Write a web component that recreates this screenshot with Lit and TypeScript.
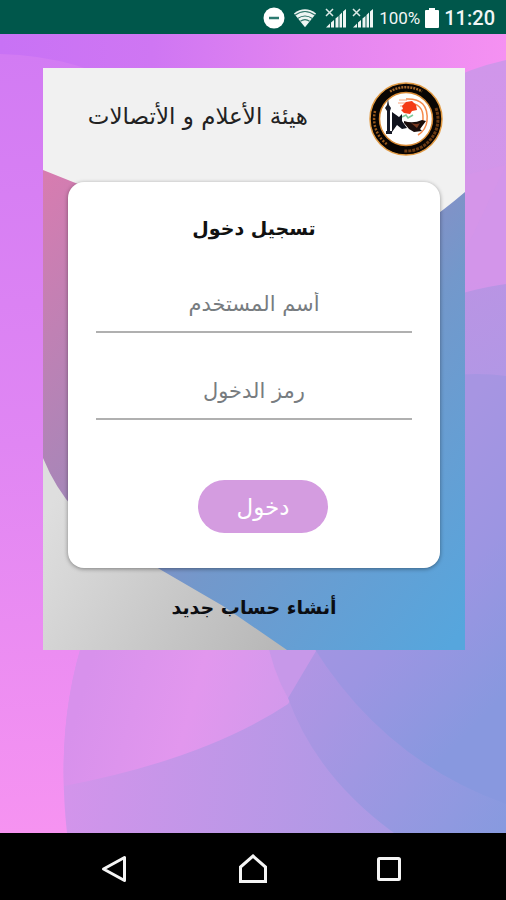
import { LitElement, html, css } from "lit";
import { customElement } from "lit/decorators.js";

@customElement("status-bar")
class StatusBar extends LitElement {
  static styles = css`
    :host {
      display: flex;
      align-items: center;
      justify-content: flex-end;
      gap: 5px;
      height: 34px;
      padding: 2px 11px 0;
      box-sizing: border-box;
      background: #00574b;
      color: #f1f6f5;
      font-family: Roboto, sans-serif;
    }
    svg { display: block; flex: none; }
    .dnd, .wifi { margin-right: 3px; }
    .percent { font-size: 17px; }
    .clock { font-size: 20px; font-weight: 500; }
  `;
  signal() {
    return html`<svg width="22" height="22" viewBox="0 0 22 22" fill="#eef5f3" aria-hidden="true">
      <path d="M1 20.500l4-4v4zM6 15.500l3-2.500v7.500H6zM10.500 11.500l3-2.500v11.500h-3zM14.500 8l2.500-2.500v15h-2.500zM18 4.500L21 2v18.500h-3z" />
      <path d="M1 2l7 7M8 2L1 9" stroke="#dceae7" stroke-width="1.500" />
    </svg>`;
  }
  render() {
    return html`
      <svg class="dnd" width="22" height="22" viewBox="0 0 22 22" aria-hidden="true">
        <circle cx="11" cy="11" r="10.500" fill="#fff" />
        <path d="M6 11h10" stroke="#2c7a70" stroke-width="2.500" />
      </svg>
      <svg class="wifi" width="24" height="22" viewBox="0 0 26 22" aria-hidden="true">
        <path d="M1 6Q13-3 25 6L13 21z" fill="#eef5f3" />
        <path d="M2 8Q13 0 24 8M5 11.500Q13 6 21 11.500M8 14.500Q13 11 18 14.500" fill="none" stroke="#2c7368" stroke-width="1.100" />
      </svg>
      ${this.signal()} ${this.signal()}
      <span class="percent">100%</span>
      <svg width="14" height="22" viewBox="0 0 14 22" aria-hidden="true">
        <path d="M4 1h6v2h3q1 0 1 1v16q0 1-1 1H1q-1 0-1-1V4q0-1 1-1h3z" fill="#fff" />
      </svg>
      <span class="clock">11:20</span>
    `;
  }
}

@customElement("org-logo")
class OrgLogo extends LitElement {
  static styles = css`
    :host { display: block; }
    svg { display: block; width: 76px; height: 76px; }
  `;
  render() {
    return html`<svg viewBox="0 0 76 76" role="img" aria-label="شعار الهيئة">
      <circle cx="38" cy="38" r="36" fill="#090503" stroke="#e19a43" stroke-width="1.500" />
      <path d="M22 10.500A32 32 0 0 1 54 10.500" fill="none" stroke="#a5682a" stroke-width="2.500" stroke-dasharray="2 1" />
      <path d="M7 30A32 32 0 0 0 20 64" fill="none" stroke="#9a5a1c" stroke-width="2.500" stroke-dasharray="2 1.500" />
      <path d="M68 27A32 32 0 0 1 36 70" fill="none" stroke="#6b3a12" stroke-width="3" stroke-dasharray="3 1" />
      <circle cx="38" cy="38" r="26.500" fill="#fff" stroke="#d88a35" stroke-width="1.500" />
      <path d="M38 18Q61 17 59 40Q58 49 50 54M39 22Q56 22 55 38Q55 44 50 49" fill="none" stroke="#f58a4c" stroke-width="1.500" />
      <path d="M31 19h8M30 22h8M32 25h6" stroke="#f8a17a" stroke-width="1" />
      <path d="M34 25l4-4 6-1 4 4 1 5-5 1-2 3-6-1-3-3 2-1z" fill="#f43b16" />
      <path d="M34 36l4-2 2 3 5-3" fill="none" stroke="#7cc89a" stroke-width="1.500" />
      <path d="M20 18l1 6 2 3-1 3v20h2v3h-6v-3h1V30l-2-3 2-3z" fill="#171a28" />
      <path d="M24 31l7 5 3-3v7l5 7-5 1-5-4-5 7z" fill="#11131d" />
      <path d="M36 40q9 3 18-1l4 1-6 8 2 2-8 1-5-3-5-6z" fill="#1a0d0b" />
      <path d="M43 42q6 2 9 0l-3 5z" fill="#7a3a20" />
    </svg>`;
  }
}

@customElement("login-panel")
class LoginPanel extends LitElement {
  static styles = css`
    :host {
      display: block;
      position: relative;
      direction: rtl;
      font-family: "DejaVu Sans", sans-serif;
    }
    .art {
      position: absolute;
      inset: 0;
      width: 100%;
      height: 100%;
    }
    .content {
      position: relative;
      display: flex;
      flex-direction: column;
      padding: 0 25px;
    }
    header {
      display: flex;
      align-items: center;
      height: 114px;
      padding-bottom: 12px;
      margin-right: -4px;
      box-sizing: border-box;
    }
    h1 {
      flex: 1;
      margin: 0;
      padding: 0 60px 6px 0;
      color: #222;
      font-size: 23px;
      font-weight: 400;
      line-height: 32px;
      white-space: nowrap;
    }
    form {
      display: flex;
      flex-direction: column;
      padding: 28px;
      height: 386px;
      box-sizing: border-box;
      border-radius: 16px;
      background: #fff;
      box-shadow: 0 1px 4px #0006;
    }
    h2 {
      margin: 0;
      color: #111;
      font-size: 19px;
      line-height: 36px;
      text-align: center;
    }
    input {
      display: block;
      width: 100%;
      height: 48px;
      margin-top: 39px;
      padding: 0 0 8px;
      box-sizing: border-box;
      border: 0;
      border-bottom: 2px solid #b0b0b0;
      background: none;
      color: #333;
      font: 21px "DejaVu Sans", sans-serif;
      text-align: center;
      outline: 0;
    }
    input::placeholder { color: #777c80; opacity: 1; }
    .submit {
      align-self: center;
      width: 130px;
      height: 53px;
      margin-top: 60px;
      margin-right: -18px;
      border: 0;
      border-radius: 27px;
      background: #d49ce0;
      color: #fff;
      font: 23px "DejaVu Sans", sans-serif;
    }
    .register {
      align-self: center;
      padding: 21px 0 25px;
      color: #0b0d12;
      font-size: 19px;
      font-weight: 700;
      line-height: 36px;
      text-decoration: none;
    }
  `;
  render() {
    return html`
      <svg class="art" viewBox="0 0 422 582" preserveAspectRatio="none" aria-hidden="true">
        <defs>
          <linearGradient id="sweep" gradientUnits="userSpaceOnUse" x1="0" y1="110" x2="469" y2="504">
            <stop offset="0" stop-color="#d77cb0" />
            <stop offset=".35" stop-color="#a886b8" />
            <stop offset=".5" stop-color="#8590c6" />
            <stop offset=".62" stop-color="#7398cb" />
            <stop offset="1" stop-color="#56a6dd" />
          </linearGradient>
          <linearGradient id="grey" gradientUnits="userSpaceOnUse" x1="0" y1="450" x2="230" y2="582">
            <stop offset="0" stop-color="#dedede" />
            <stop offset="1" stop-color="#b8b8b8" />
          </linearGradient>
        </defs>
        <rect width="422" height="582" fill="#f1f1f1" />
        <path d="M0 102L120 150L340 180Q380 160 422 124V582H0z" fill="url(#sweep)" />
        <path d="M0 390Q14 424 36 446L113 499L180 538L244 582H0z" fill="url(#grey)" />
      </svg>
      <div class="content">
        <header>
          <org-logo></org-logo>
          <h1>هيئة الأعلام و الأتصالات</h1>
        </header>
        <form @submit=${(e: Event) => e.preventDefault()}>
          <h2>تسجيل دخول</h2>
          <input type="text" aria-label="أسم المستخدم" placeholder="أسم المستخدم" />
          <input type="password" aria-label="رمز الدخول" placeholder="رمز الدخول" />
          <button class="submit">دخول</button>
        </form>
        <a class="register" href="#register">أنشاء حساب جديد</a>
      </div>
    `;
  }
}

@customElement("nav-bar")
class NavBar extends LitElement {
  static styles = css`
    :host {
      display: flex;
      align-items: center;
      justify-content: center;
      gap: 96px;
      height: 67px;
      padding-top: 4px;
      box-sizing: border-box;
      background: #000;
    }
    button {
      display: grid;
      place-items: center;
      width: 40px;
      height: 40px;
      padding: 0;
      border: 0;
      background: none;
    }
    svg { fill: none; stroke: #f5f5f5; stroke-width: 3; }
  `;
  render() {
    return html`
      <button aria-label="Back"><svg width="32" height="32"><path d="M23.500 4.500v23L2.500 16z" stroke-linejoin="round" /></svg></button>
      <button aria-label="Home"><svg width="32" height="32"><path d="M16 3L28.500 14v14.500h-25V14z" /></svg></button>
      <button aria-label="Recents"><svg width="32" height="32"><rect x="5.500" y="5.500" width="21" height="21" rx="1" /></svg></button>
    `;
  }
}

@customElement("app-root")
class AppRoot extends LitElement {
  static styles = css`
    :host {
      display: flex;
      flex-direction: column;
      min-height: 100vh;
    }
    main {
      position: relative;
      flex: 1;
      padding: 34px 41px 34px 43px;
      overflow: hidden;
    }
    .backdrop {
      position: absolute;
      inset: 0;
      width: 100%;
      height: 100%;
    }
  `;
  render() {
    return html`
      <status-bar></status-bar>
      <main>
        <svg class="backdrop" viewBox="0 0 506 799" preserveAspectRatio="none" aria-hidden="true">
          <defs>
            <linearGradient id="base" gradientUnits="userSpaceOnUse" x1="0" y1="20" x2="40" y2="799">
              <stop offset="0" stop-color="#d27bf3" />
              <stop offset=".5" stop-color="#e086f3" />
              <stop offset="1" stop-color="#f693f1" />
            </linearGradient>
            <linearGradient id="top" gradientUnits="userSpaceOnUse" x1="0" y1="0" x2="506" y2="0">
              <stop offset="0" stop-color="#c872f5" />
              <stop offset=".3" stop-color="#cf76f3" />
              <stop offset=".6" stop-color="#e284f0" />
              <stop offset="1" stop-color="#f591f2" />
            </linearGradient>
            <linearGradient id="first" gradientUnits="userSpaceOnUse" x1="460" y1="30" x2="480" y2="280">
              <stop offset="0" stop-color="#d096ea" />
              <stop offset="1" stop-color="#d595e9" />
            </linearGradient>
            <linearGradient id="second" gradientUnits="userSpaceOnUse" x1="460" y1="250" x2="506" y2="340">
              <stop offset="0" stop-color="#ba94e4" />
              <stop offset="1" stop-color="#b297e5" />
            </linearGradient>
            <linearGradient id="third" gradientUnits="userSpaceOnUse" x1="340" y1="500" x2="506" y2="660">
              <stop offset="0" stop-color="#a795e2" />
              <stop offset=".5" stop-color="#9c95e2" />
              <stop offset="1" stop-color="#8898df" />
            </linearGradient>
            <linearGradient id="low" gradientUnits="userSpaceOnUse" x1="64" y1="750" x2="390" y2="790">
              <stop offset="0" stop-color="#d394eb" />
              <stop offset="1" stop-color="#aa9ae4" />
            </linearGradient>
            <linearGradient id="petal" gradientUnits="userSpaceOnUse" x1="90" y1="630" x2="300" y2="690">
              <stop offset="0" stop-color="#d891ec" />
              <stop offset=".5" stop-color="#e297ee" />
              <stop offset="1" stop-color="#d09aeb" />
            </linearGradient>
            <linearGradient id="band" gradientUnits="userSpaceOnUse" x1="290" y1="650" x2="506" y2="799">
              <stop offset="0" stop-color="#b095e4" />
              <stop offset="1" stop-color="#879adf" />
            </linearGradient>
          </defs>
          <rect width="506" height="799" fill="url(#base)" />
          <path d="M0 0H506V60H140Q80 22 0 20z" fill="url(#top)" />
          <path d="M506 26Q470 34 440 50V400H506z" fill="url(#first)" />
          <path d="M506 131Q484 136 440 148V248H506z" fill="#d595e9" />
          <path d="M506 131L440 270L440 400H506z" fill="#d095ea" opacity=".4" />
          <path d="M506 250Q480 253 440 266V400H506z" fill="url(#second)" />
          <path d="M85 600Q55 690 67 799H506V600z" fill="url(#low)" />
          <path d="M85 600Q61 672 64 752Q205 725 288 670L325 610V600z" fill="url(#petal)" />
          <path d="M266 600Q272 636 288 664L326 600z" fill="#c798e9" />
          <path d="M326 600L288 664Q316 742 394 799H506V600z" fill="url(#band)" />
          <path d="M506 342Q480 338 440 342L300 590Q372 722 506 770z" fill="url(#third)" />
        </svg>
        <login-panel></login-panel>
      </main>
      <nav-bar></nav-bar>
    `;
  }
}
